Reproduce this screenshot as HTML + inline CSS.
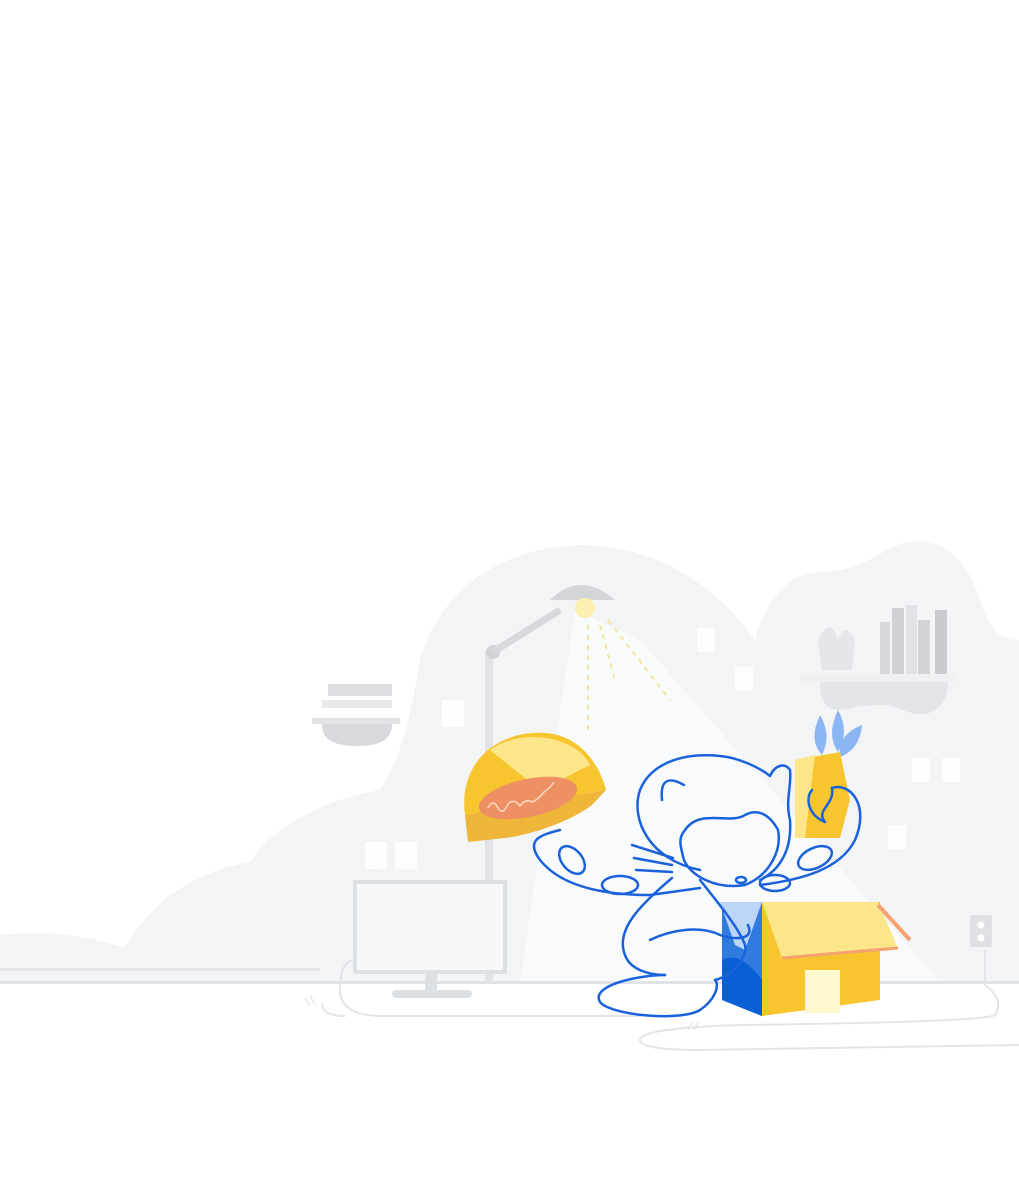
<!DOCTYPE html>
<html><head><meta charset="utf-8"><style>
html,body{margin:0;padding:0;background:#fff;width:1019px;height:1188px;overflow:hidden}
svg{display:block}
</style></head><body>
<svg width="1019" height="1188" viewBox="0 0 1019 1188" xmlns="http://www.w3.org/2000/svg">
<!-- background blob -->
<path fill="#f3f4f6" d="M0 935 C40 930 90 935 125 948 C150 900 200 870 250 862 C270 830 320 800 380 790 C400 760 410 720 420 660 C440 590 500 548 580 545 C660 545 720 590 755 640 C765 600 790 572 820 572 C850 572 870 560 890 548 C930 530 965 550 980 600 C990 630 1000 640 1019 640 L1019 982 L0 982 Z"/>
<!-- light cone -->
<path fill="#fafbfc" d="M575 610 L520 982 L940 982 L640 640 Z" opacity="0.8"/>
<!-- floor -->
<rect x="0" y="968" width="320" height="3" fill="#e2e4e8"/>
<rect x="0" y="981" width="1019" height="3" fill="#dfe2e6"/>
<!-- wall bits -->
<g fill="#fff" opacity="0.85">
<rect x="442" y="700" width="22" height="27"/><rect x="697" y="628" width="18" height="24"/><rect x="735" y="667" width="18" height="24"/>
<rect x="365" y="842" width="22" height="27"/><rect x="395" y="842" width="22" height="27"/>
<rect x="912" y="758" width="18" height="24"/><rect x="942" y="758" width="18" height="24"/><rect x="888" y="825" width="18" height="24"/>
</g>
<!-- left shelf -->
<rect x="328" y="684" width="64" height="12" fill="#dcdee2"/>
<rect x="322" y="700" width="70" height="8" fill="#e6e8eb"/>
<rect x="312" y="718" width="88" height="6" fill="#e0e2e6"/>
<path d="M322 724 L392 724 C392 740 380 746 357 746 C334 746 322 740 322 724Z" fill="#d7d9dd"/>
<!-- right shelf -->
<path d="M820 680 L948 680 C948 700 940 714 920 714 C905 714 900 705 880 705 C850 705 840 714 830 708 C822 703 820 695 820 680Z" fill="#e3e5e8"/>
<rect x="800" y="674" width="155" height="8" fill="#eef0f2"/>
<path d="M818 640 Q830 615 838 640 Q845 620 855 640 L852 670 L822 670Z" fill="#e4e6e9"/>
<rect x="880" y="622" width="10" height="52" fill="#d6d8dc"/><rect x="892" y="608" width="12" height="66" fill="#cfd1d5"/><rect x="906" y="605" width="11" height="69" fill="#e0e2e5"/><rect x="918" y="620" width="12" height="54" fill="#d2d4d8"/><rect x="935" y="610" width="12" height="64" fill="#c9cbcf"/>
<!-- lamp -->
<rect x="485" y="652" width="8" height="330" fill="#e0e2e5"/>
<circle cx="493" cy="652" r="7" fill="#d0d2d6"/>
<path d="M493 652 L560 610" stroke="#d6d8dc" stroke-width="7"/>
<path d="M550 600 Q580 570 615 600 Z" fill="#d3d5d9"/>
<circle cx="585" cy="608" r="10" fill="#fbf0b0"/>
<g stroke="#f1e69a" stroke-width="2" stroke-dasharray="5 5" fill="none">
<path d="M588 625 L588 730"/><path d="M600 625 L615 680"/><path d="M608 620 L670 700"/></g>
<!-- monitor -->
<rect x="355" y="882" width="150" height="90" fill="#f7f8f9" stroke="#dde0e4" stroke-width="4"/>
<rect x="425" y="972" width="12" height="18" fill="#dde0e4"/>
<rect x="392" y="990" width="80" height="8" rx="4" fill="#dde0e4"/>
<!-- cables -->
<g fill="none" stroke="#e2e4e8" stroke-width="2">
<path d="M355 960 Q340 960 340 990 Q340 1015 380 1016 L640 1016"/>
<path d="M322 1003 Q322 1016 345 1016"/>
<path d="M985 950 L985 985 Q1005 1000 995 1015 Q985 1022 740 1025 Q640 1028 640 1040 Q640 1050 700 1050 L1019 1045"/>
</g>
<rect x="970" y="915" width="22" height="32" rx="2" fill="#dfe1e4"/>
<circle cx="981" cy="925" r="3.5" fill="#fff"/><circle cx="981" cy="938" r="3.5" fill="#fff"/>
<!-- helmet -->
<path d="M465 815 C458 760 500 730 545 733 C580 735 600 765 606 790 Z" fill="#f7c62f"/>
<path d="M490 750 C520 728 575 735 590 765 L540 790 Z" fill="#fde68a"/>
<path d="M465 815 L606 790 L592 805 C570 822 530 835 505 838 L468 842 Z" fill="#f0b63a"/>
<ellipse cx="528" cy="798" rx="50" ry="19" transform="rotate(-12 528 798)" fill="#ee9064"/>
<path d="M488 808 q5 -10 10 0 q5 8 10 -4 q6 -6 12 2 q6 -8 12 -4 q6 -2 12 -10 q6 -4 10 -10" stroke="#fbd9c4" stroke-width="1.5" fill="none"/>
<!-- box -->
<path d="M722 902 L762 902 L762 1016 L722 1000 Z" fill="#2f7be0"/>
<path d="M722 960 Q740 950 762 980 L762 1016 L722 1000Z" fill="#0b5fd6"/>
<path d="M720 902 L762 902 L745 950 L735 945 Z" fill="#bcd6f7"/>
<path d="M762 902 L880 902 L880 1000 L762 1016 Z" fill="#f7c62f"/>
<path d="M762 902 L878 902 L898 948 L782 958 Z" fill="#fde68a"/>
<path d="M782 958 L898 948" stroke="#f4a26e" stroke-width="3"/>
<path d="M878 905 L910 940" stroke="#f4a26e" stroke-width="4"/>
<rect x="805" y="970" width="35" height="43" fill="#fff7d0"/>
<!-- plant -->
<path d="M820 715 q-12 25 2 40 q10 -20 -2 -40Z M838 710 q-12 25 0 42 q12 -20 0 -42Z M862 725 q-25 10 -22 32 q20 -8 22 -32Z" fill="#8ab7f3"/>
<path d="M795 760 L840 752 L850 800 L840 838 L795 838 Z" fill="#f7c62f"/>
<path d="M795 760 L815 755 L805 838 L795 838Z" fill="#fde68a"/>
<!-- octocat outline -->
<g fill="none" stroke="#1a62dc" stroke-width="2.5" stroke-linecap="round" stroke-linejoin="round">
<path d="M700 870 C650 860 630 820 640 790 C650 765 680 752 720 756 C740 758 760 768 770 776 C775 765 785 762 790 770 C792 785 785 800 790 820 C792 850 780 870 760 880"/>
<path d="M662 800 C660 780 668 776 684 785"/>
<path d="M685 830 C700 808 730 825 745 815 C758 808 770 815 778 830 C782 850 770 875 745 885 C715 890 690 875 684 860 C680 845 678 838 685 830Z"/>
<ellipse cx="741" cy="880" rx="5" ry="3"/>
<path d="M632 845 L673 858 M634 858 L672 865 M636 870 L672 872"/>
<path d="M672 878 C640 905 615 930 625 955 C630 970 650 975 665 975 M700 880 C720 905 740 930 745 945 C748 955 735 975 715 980"/>
<path d="M650 940 C670 930 700 925 720 935 C735 940 755 940 748 925"/>
<path d="M665 975 C640 975 590 985 600 1002 C610 1015 680 1022 700 1010 C715 1000 720 985 715 980"/>
<path d="M560 830 C540 835 525 840 540 860 C560 885 600 895 650 895 L700 888"/>
<ellipse cx="572" cy="860" rx="10" ry="16" transform="rotate(-40 572 860)"/>
<ellipse cx="620" cy="885" rx="18" ry="9"/>
<path d="M760 885 C800 880 840 870 855 840 C870 805 850 782 832 788"/>
<path d="M812 790 C805 798 808 815 825 822 C815 810 835 805 832 788"/>
<ellipse cx="815" cy="858" rx="18" ry="10" transform="rotate(-25 815 858)"/>
<ellipse cx="775" cy="883" rx="15" ry="8"/>
</g>
<g stroke="#e6e8eb" stroke-width="1.5"><path d="M305 998 l5 8 M310 996 l5 8 M688 1030 l4 -8 M694 1030 l4 -8"/></g>
</svg>
</body></html>
